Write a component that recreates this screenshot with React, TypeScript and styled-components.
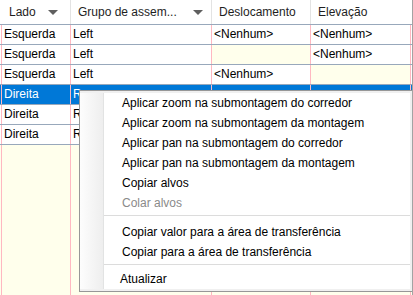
import * as React from 'react';
import styled, { createGlobalStyle } from 'styled-components';

const GlobalStyle = createGlobalStyle`
  html, body {
    margin: 0;
    padding: 0;
  }
  body {
    width: 413px;
    height: 295px;
    overflow: hidden;
    background: #fff;
    font-family: 'Liberation Sans', Arial, sans-serif;
    font-size: 12px;
  }
`;

const PINK = '#ffb8c1';
const ROWLINE = '#98a8bb';
const CREAM = '#ffffec';
const COLUMNS = '69px 141px 99px 101px';

const Grid = styled.div`
  position: relative;
  box-sizing: border-box;
  width: 413px;
  height: 295px;
  display: flex;
  flex-direction: column;
  background: ${CREAM};
  border-right: 1px solid #a3a3a3;
  overflow: hidden;
`;

const HeaderRow = styled.div`
  display: grid;
  grid-template-columns: ${COLUMNS};
  height: 24px;
  padding-left: 1px;
  background: #fff;
  border-bottom: 1px solid ${ROWLINE};
`;

const HeaderCell = styled.div<{ $arrowGap?: number }>`
  box-sizing: border-box;
  display: flex;
  align-items: center;
  justify-content: space-between;
  padding: 0 ${p => p.$arrowGap ?? 0}px 0 7px;
  border-left: 1px solid #fff;
  color: #1e1e1e;
  line-height: 24px;
  white-space: nowrap;
  overflow: hidden;

  & + & {
    border-left-color: #e3e3e3;
  }
`;

const SortArrow = () => (
  <svg width="10" height="5" viewBox="0 0 10 5">
    <polygon points="0,0 10,0 5,5" fill="#5f5f5f" />
  </svg>
);

const Row = styled.div<{ $selected?: boolean }>`
  display: grid;
  grid-template-columns: ${COLUMNS};
  height: 19px;
  padding-left: 1px;
  background: ${p => (p.$selected ? '#0078d7' : '#fff')};
  color: ${p => (p.$selected ? '#fff' : '#000')};
  border-bottom: 1px solid ${ROWLINE};
`;

const Cell = styled.div<{ $empty?: boolean }>`
  box-sizing: border-box;
  padding-left: 2px;
  line-height: 19px;
  white-space: nowrap;
  overflow: hidden;
  border-left: 1px solid ${PINK};
  background: ${p => (p.$empty ? CREAM : 'transparent')};

  &:last-child {
    border-right: 1px solid ${PINK};
  }
`;

const Filler = styled.div`
  flex: 1;
  display: grid;
  grid-template-columns: ${COLUMNS};
  padding-left: 1px;
`;

const Menu = styled.div`
  position: absolute;
  left: 79px;
  top: 90px;
  box-sizing: border-box;
  width: 334px;
  height: 202px;
  border: 1px solid #979797;
  background: #f0f0f0;
  padding: 2px 2px 2px 0;
  display: flex;
  flex-direction: column;
`;

const MenuList = styled.div`
  flex: 1;
  display: flex;
  flex-direction: column;
  background: linear-gradient(
    to right,
    #fdfdfd 0,
    #eeeeee 23px,
    #e2e3e3 23px,
    #e2e3e3 24px,
    #ffffff 24px
  );
`;

const MenuItem = styled.div<{ $disabled?: boolean; $indent?: number }>`
  height: 20px;
  line-height: 20px;
  padding-left: ${p => p.$indent ?? 42}px;
  color: ${p => (p.$disabled ? '#8a8a8a' : '#000')};
  white-space: nowrap;
`;

const Separator = styled.div<{ $h: number; $line: number }>`
  height: ${p => p.$h}px;
  margin-left: 24px;
  background:
    linear-gradient(#dcdcdc, #dcdcdc) 0 ${p => p.$line}px / 100% 1px no-repeat,
    linear-gradient(#fff, #fff) 0 ${p => p.$line + 1}px / 100% 1px no-repeat;
`;

// the last three rows sit under the context menu, so only their first
// column and the start of the second one are visible
const rows = [
  { lado: 'Esquerda', grupo: 'Left', desl: '<Nenhum>', elev: '<Nenhum>' },
  { lado: 'Esquerda', grupo: 'Left', desl: '', elev: '<Nenhum>' },
  { lado: 'Esquerda', grupo: 'Left', desl: '<Nenhum>', elev: '' },
  { lado: 'Direita', grupo: 'R', desl: '', elev: '', selected: true },
  { lado: 'Direita', grupo: 'R', desl: '', elev: '', hidden: true },
  { lado: 'Direita', grupo: 'R', desl: '', elev: '', hidden: true },
];

const App: React.FC = () => (
  <>
    <GlobalStyle />
    <Grid>
      <HeaderRow>
        <HeaderCell $arrowGap={12}>
          Lado
          <SortArrow />
        </HeaderCell>
        <HeaderCell $arrowGap={8}>
          Grupo de assem...
          <SortArrow />
        </HeaderCell>
        <HeaderCell>Deslocamento</HeaderCell>
        <HeaderCell>Elevação</HeaderCell>
      </HeaderRow>

      {rows.map((r, i) => (
        <Row key={i} $selected={r.selected}>
          <Cell>{r.lado}</Cell>
          <Cell>{r.grupo}</Cell>
          <Cell $empty={!r.desl && !r.selected && !r.hidden}>{r.desl}</Cell>
          <Cell $empty={!r.elev && !r.selected && !r.hidden}>{r.elev}</Cell>
        </Row>
      ))}

      <Filler>
        <Cell $empty />
        <Cell $empty />
        <Cell $empty />
        <Cell $empty />
      </Filler>

      <Menu>
        <MenuList>
          <MenuItem>Aplicar zoom na submontagem do corredor</MenuItem>
          <MenuItem>Aplicar zoom na submontagem da montagem</MenuItem>
          <MenuItem>Aplicar pan na submontagem do corredor</MenuItem>
          <MenuItem>Aplicar pan na submontagem da montagem</MenuItem>
          <MenuItem>Copiar alvos</MenuItem>
          <MenuItem $disabled>Colar alvos</MenuItem>
          <Separator $h={9} $line={2} />
          <MenuItem>Copiar valor para a área de transferência</MenuItem>
          <MenuItem>Copiar para a área de transferência</MenuItem>
          <Separator $h={7} $line={2} />
          <MenuItem $indent={40}>Atualizar</MenuItem>
        </MenuList>
      </Menu>
    </Grid>
  </>
);

export default App;
